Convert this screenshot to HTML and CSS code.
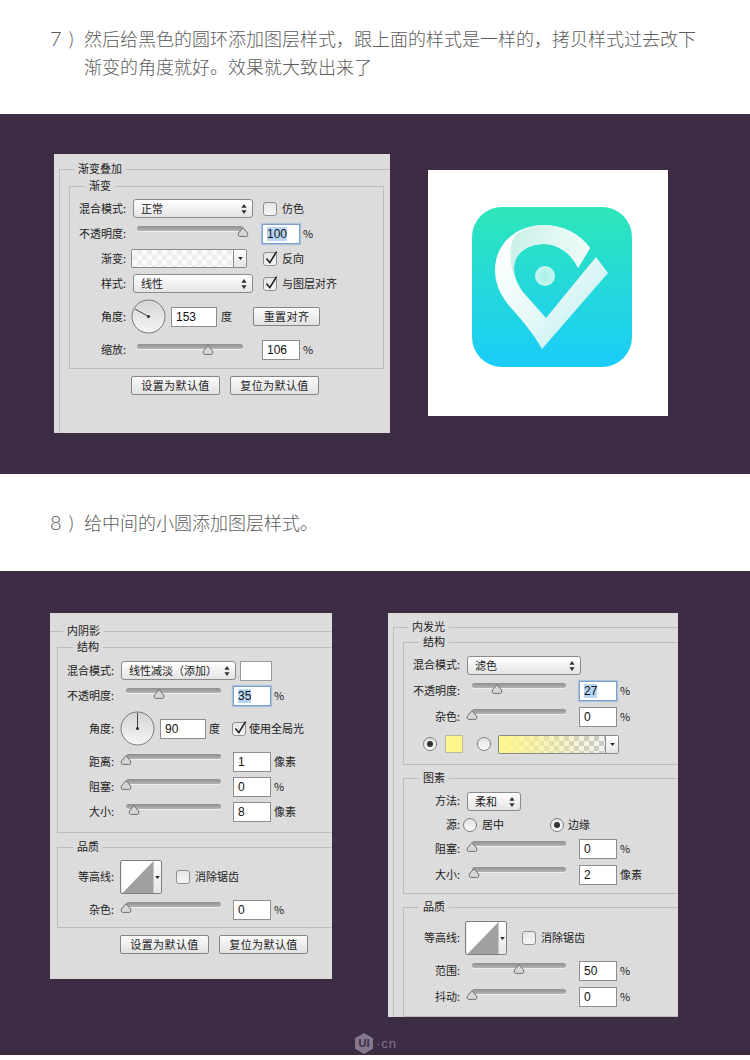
FILE: index.html
```html
<!DOCTYPE html>
<html lang="zh-CN">
<head>
<meta charset="utf-8">
<title>图层样式教程</title>
<link rel="stylesheet" href="styles.css">
</head>
<body>
<svg class="defs" width="0" height="0" aria-hidden="true">
  <defs>
    <linearGradient id="dialFill" x1="0" y1="0" x2="0" y2="1"><stop offset="0" stop-color="#d4d4d4"/><stop offset="1" stop-color="#f6f6f6"/></linearGradient>
    <linearGradient id="iconBg" x1="0" y1="0" x2="0" y2="1"><stop offset="0" stop-color="#2ee6b9"/><stop offset="1" stop-color="#1accfa"/></linearGradient>
    <linearGradient id="pinBody" gradientUnits="userSpaceOnUse" x1="495" y1="250" x2="590" y2="340"><stop offset="0" stop-color="#ffffff"/><stop offset="0.55" stop-color="#e6f9f8"/><stop offset="1" stop-color="#bfeef0"/></linearGradient>
    <linearGradient id="pinRing" gradientUnits="userSpaceOnUse" x1="510" y1="250" x2="590" y2="250"><stop offset="0" stop-color="#cbf0e8"/><stop offset="1" stop-color="#effcf9"/></linearGradient>
    <radialGradient id="pinDot"><stop offset="0" stop-color="#a5f0e6"/><stop offset="1" stop-color="#c8f7f2"/></radialGradient>
    <symbol id="thumb" viewBox="0 0 12 10"><path d="M6 .7 L10.6 6 Q11.5 9.4 9.5 9.4 H2.5 Q.5 9.4 1.4 6 Z" fill="#d6d6d6" stroke="#6f6f6f" stroke-width="1"/></symbol>
    <symbol id="updown" viewBox="0 0 6 10"><path d="M3 0 L5.6 3.8 H.4 Z M3 10 L.4 6.2 H5.6 Z" fill="#333"/></symbol>
    <symbol id="caret" viewBox="0 0 6 4"><path d="M0 0 H6 L3 4 Z" fill="#222"/></symbol>
    <symbol id="check" viewBox="0 0 16 16"><path d="M3.4 8.6 L6.8 12.6 L13.6 1.6" fill="none" stroke="#222" stroke-width="1.6"/></symbol>
  </defs>
</svg>

<section class="text-band band-a">
  <p class="step"><span class="step-no">7<span class="paren">)</span></span><span>然后给黑色的圆环添加图层样式，跟上面的样式是一样的，拷贝样式过去改下<br>渐变的角度就好。效果就大致出来了</span></p>
</section>

<section class="dark-band band-one">
  <div class="panel panel-gradient">
    <div class="group outer">
      <span class="legend">渐变叠加</span>
      <div class="group inner">
        <span class="legend">渐变</span>
        <div class="row">
          <span class="label">混合模式:</span>
          <div class="select">正常<svg class="updown"><use href="#updown"/></svg></div>
          <span class="box after-select"></span><span class="box-text">仿色</span>
        </div>
        <div class="row">
          <span class="label">不透明度:</span>
          <div class="slider"><svg class="thumb" style="left:100%"><use href="#thumb"/></svg></div>
          <div class="field focus"><span class="sel">100</span></div><span class="unit">%</span>
        </div>
        <div class="row">
          <span class="label">渐变:</span>
          <div class="swatch-bar"><div class="checker"></div><div class="caret-cell"><svg class="caret"><use href="#caret"/></svg></div></div>
          <span class="box checked after-bar"><svg class="tick"><use href="#check"/></svg></span><span class="box-text">反向</span>
        </div>
        <div class="row">
          <span class="label">样式:</span>
          <div class="select">线性<svg class="updown"><use href="#updown"/></svg></div>
          <span class="box checked after-select"><svg class="tick"><use href="#check"/></svg></span><span class="box-text">与图层对齐</span>
        </div>
        <div class="row row-dial">
          <span class="label">角度:</span>
          <svg class="dial" viewBox="0 0 35 35"><circle cx="17.5" cy="17.5" r="16.5" fill="url(#dialFill)" stroke="#777"/><line x1="17.5" y1="17.5" x2="4" y2="10" stroke="#444"/><circle cx="17.5" cy="17.5" r="1.6" fill="#333"/></svg>
          <div class="field angle">153</div><span class="unit deg">度</span>
          <div class="btn btn-reset">重置对齐</div>
        </div>
        <div class="row">
          <span class="label">缩放:</span>
          <div class="slider low"><svg class="thumb" style="left:67%"><use href="#thumb"/></svg></div>
          <div class="field">106</div><span class="unit">%</span>
        </div>
      </div>
      <div class="btn-row"><div class="btn">设置为默认值</div><div class="btn">复位为默认值</div></div>
    </div>
  </div>

  <div class="preview">
    <svg class="app-icon" viewBox="472 207 160 160">
      <rect x="472" y="207" width="160" height="160" rx="30" fill="url(#iconBg)"/>
      <path d="M542 349 L608 273 L596 257 L546 318 L523 292 C517 284 514 276 514 268 C514 253 528 244 544 244 C558 244 572 254 578 268 L590 248 C580 234 563 225 544 225 C516 225 495 244 495 270 C495 285 502 298 512 309 C522 320 533 333 542 349 Z" fill="url(#pinBody)"/>
      <path d="M578 268 L590 248 C580 234 563 225 544 225 C532 225 521 229 514 237 C509 247 509 264 515 279 C514 275 514 272 514 268 C514 253 528 244 544 244 C558 244 572 254 578 268 Z" fill="url(#pinRing)"/>
      <circle cx="545" cy="276" r="10" fill="url(#pinDot)"/>
    </svg>
  </div>
</section>

<section class="text-band band-b">
  <p class="step"><span class="step-no">8<span class="paren">)</span></span><span>给中间的小圆添加图层样式。</span></p>
</section>

<section class="dark-band band-two">
  <div class="panel panel-shadow">
    <div class="group outer">
      <span class="legend">内阴影</span>
      <div class="group inner">
        <span class="legend">结构</span>
        <div class="row">
          <span class="label">混合模式:</span>
          <div class="select">线性减淡（添加）<svg class="updown"><use href="#updown"/></svg></div>
          <div class="color-chip"></div>
        </div>
        <div class="row">
          <span class="label">不透明度:</span>
          <div class="slider"><svg class="thumb" style="left:35%"><use href="#thumb"/></svg></div>
          <div class="field focus"><span class="sel">35</span></div><span class="unit">%</span>
        </div>
        <div class="row row-dial">
          <span class="label">角度:</span>
          <svg class="dial" viewBox="0 0 35 35"><circle cx="17.5" cy="17.5" r="16.5" fill="url(#dialFill)" stroke="#777"/><line x1="17.5" y1="17.5" x2="17.5" y2="2" stroke="#444"/><circle cx="17.5" cy="17.5" r="1.6" fill="#333"/></svg>
          <div class="field angle">90</div><span class="unit deg">度</span>
          <span class="box checked after-deg"><svg class="tick"><use href="#check"/></svg></span><span class="box-text tight">使用全局光</span>
        </div>
        <div class="row">
          <span class="label">距离:</span>
          <div class="slider"><svg class="thumb" style="left:0%"><use href="#thumb"/></svg></div>
          <div class="field">1</div><span class="unit">像素</span>
        </div>
        <div class="row">
          <span class="label">阻塞:</span>
          <div class="slider"><svg class="thumb" style="left:0%"><use href="#thumb"/></svg></div>
          <div class="field">0</div><span class="unit">%</span>
        </div>
        <div class="row">
          <span class="label">大小:</span>
          <div class="slider"><svg class="thumb" style="left:8%"><use href="#thumb"/></svg></div>
          <div class="field">8</div><span class="unit">像素</span>
        </div>
      </div>
      <div class="group inner quality">
        <span class="legend">品质</span>
        <div class="row row-contour">
          <span class="label">等高线:</span>
          <div class="contour"><svg class="curve" viewBox="0 0 33 33"><rect width="33" height="33" fill="#fff"/><path d="M1 33 L33 0 V33 Z" fill="#a0a0a0"/></svg><div class="contour-caret"><svg class="caret"><use href="#caret"/></svg></div></div>
          <span class="box after-contour"></span><span class="box-text">消除锯齿</span>
        </div>
        <div class="row">
          <span class="label">杂色:</span>
          <div class="slider"><svg class="thumb" style="left:0%"><use href="#thumb"/></svg></div>
          <div class="field">0</div><span class="unit">%</span>
        </div>
      </div>
      <div class="btn-row"><div class="btn">设置为默认值</div><div class="btn">复位为默认值</div></div>
    </div>
  </div>

  <div class="panel panel-glow">
    <div class="group outer">
      <span class="legend">内发光</span>
      <div class="group inner">
        <span class="legend">结构</span>
        <div class="row">
          <span class="label">混合模式:</span>
          <div class="select">滤色<svg class="updown"><use href="#updown"/></svg></div>
        </div>
        <div class="row">
          <span class="label">不透明度:</span>
          <div class="slider"><svg class="thumb" style="left:27%"><use href="#thumb"/></svg></div>
          <div class="field focus"><span class="sel">27</span></div><span class="unit">%</span>
        </div>
        <div class="row">
          <span class="label">杂色:</span>
          <div class="slider"><svg class="thumb" style="left:0%"><use href="#thumb"/></svg></div>
          <div class="field">0</div><span class="unit">%</span>
        </div>
        <div class="row row-colors">
          <span class="radio on first"></span>
          <div class="yellow-chip"></div>
          <span class="radio second"></span>
          <div class="swatch-bar yellow"><div class="checker"></div><div class="caret-cell"><svg class="caret"><use href="#caret"/></svg></div></div>
        </div>
      </div>
      <div class="group inner elements">
        <span class="legend">图素</span>
        <div class="row">
          <span class="label">方法:</span>
          <div class="select short">柔和<svg class="updown"><use href="#updown"/></svg></div>
        </div>
        <div class="row row-source">
          <span class="label">源:</span>
          <span class="radio src-a"></span><span class="box-text">居中</span>
          <span class="radio on src-b"></span><span class="box-text near">边缘</span>
        </div>
        <div class="row">
          <span class="label">阻塞:</span>
          <div class="slider"><svg class="thumb" style="left:0%"><use href="#thumb"/></svg></div>
          <div class="field">0</div><span class="unit">%</span>
        </div>
        <div class="row">
          <span class="label">大小:</span>
          <div class="slider"><svg class="thumb" style="left:2%"><use href="#thumb"/></svg></div>
          <div class="field">2</div><span class="unit">像素</span>
        </div>
      </div>
      <div class="group inner quality">
        <span class="legend">品质</span>
        <div class="row row-contour">
          <span class="label">等高线:</span>
          <div class="contour"><svg class="curve" viewBox="0 0 33 33"><rect width="33" height="33" fill="#fff"/><path d="M1 33 L33 0 V33 Z" fill="#a0a0a0"/></svg><div class="contour-caret"><svg class="caret"><use href="#caret"/></svg></div></div>
          <span class="box after-contour"></span><span class="box-text">消除锯齿</span>
        </div>
        <div class="row">
          <span class="label">范围:</span>
          <div class="slider"><svg class="thumb" style="left:50%"><use href="#thumb"/></svg></div>
          <div class="field">50</div><span class="unit">%</span>
        </div>
        <div class="row">
          <span class="label">抖动:</span>
          <div class="slider"><svg class="thumb" style="left:0%"><use href="#thumb"/></svg></div>
          <div class="field">0</div><span class="unit">%</span>
        </div>
      </div>
    </div>
  </div>

  <div class="watermark">
    <span class="hex"><svg class="hex-shape" viewBox="0 0 18 21"><path d="M9 0 L18 5.2 V15.8 L9 21 L0 15.8 V5.2 Z" fill="#85788c"/></svg><span class="hex-text">UI</span></span>
    <span class="wm-text">·cn</span>
  </div>
</section>
</body>
</html>
```

FILE: styles.css
```css
* { box-sizing: border-box; }

html, body {
  margin: 0;
  padding: 0;
  background: #fff;
}

body {
  width: 750px;
  height: 1060px;
  overflow: hidden;
  font-family: "Noto Sans CJK SC", "Liberation Sans", sans-serif;
  color: #222;
}

.defs { position: absolute; }

/* text bands */
.text-band { background: #fff; padding-left: 50px; }
.band-a { height: 114px; padding-top: 24px; }
.band-b { height: 97px; padding-top: 34px; }

.step {
  margin: 0;
  display: flex;
  font-size: 18px;
  line-height: 28px;
  font-weight: 300;
  color: #5c5c5c;
}

.step-no {
  flex: none;
  width: 34px;
  font-family: "Lato", "Liberation Sans", sans-serif;
  font-size: 20px;
  font-weight: 300;
  color: #5c5c5c;
}

.paren { margin-left: 7px; }

/* dark bands */
.dark-band {
  position: relative;
  display: flex;
  align-items: flex-start;
  background: #3c2c44;
}

.band-one { height: 360px; padding: 40px 0 0 54px; gap: 38px; }
.band-two { height: 484px; padding: 42px 0 0 50px; gap: 56px; }

/* panels */
.panel {
  flex: none;
  background: #dcdcdc;
  overflow: hidden;
  font-size: 11px;
  line-height: 14px;
  --label: 56px;
  --select: 120px;
  --slider-gap: 11px;
  --slider: 106px;
  --field-gap: 19px;
  --select-gap: 7px;
  --row: 25px;
}

.panel-gradient { width: 336px; height: 279px; --select: 120px; }
.panel-shadow {
  width: 282px;
  height: 366px;
  --select: 115px;
  --slider-gap: 12px;
  --slider: 95px;
  --field-gap: 12px;
}
.panel-glow {
  width: 290px;
  height: 404px;
  --select: 114px;
  --slider-gap: 12px;
  --slider: 94px;
  --field-gap: 13px;
  --row: 26px;
}

.group {
  position: relative;
  border: 1px solid #bcbcbc;
}

.legend {
  position: absolute;
  top: -9px;
  height: 14px;
  padding: 0 4px;
  background: #dcdcdc;
  white-space: nowrap;
}

.outer {
  border-right: 0;
  border-bottom: 0;
}

.panel-gradient .outer { margin: 15px 0 0 5px; padding: 16px 6px 0 9px; height: 264px; }
.panel-gradient .outer > .legend { left: 14px; }
.panel-shadow .outer { margin-top: 18px; padding: 15px 0 0 7px; height: 348px; border-left: 0; }
.panel-shadow .outer > .legend { left: 13px; }
.panel-glow .outer { margin: 14px 0 0 5px; padding: 14px 0 0 9px; height: 390px; }
.panel-glow .outer > .legend { left: 14px; }

.inner > .legend { left: 15px; }

.panel-gradient .inner { padding: 9px 0 5px; height: 183px; }
.panel-shadow .inner { padding: 10px 0 8px; border-right: 0; }
.panel-shadow .quality { margin-top: 14px; padding: 12px 0 5px; }
.panel-glow .inner { padding: 9px 0 6px; border-right: 0; }
.panel-glow .elements { margin-top: 13px; padding-bottom: 5px; }
.panel-glow .quality { margin-top: 13px; padding: 13px 0 6px; }

/* rows */
.row {
  display: flex;
  align-items: center;
  height: var(--row);
  white-space: nowrap;
}

.row-dial { height: 35px; margin: 3px 0; }
.row-contour { height: 34px; margin-bottom: 3px; }
.row-colors { height: 28px; padding-left: 19px; }
.row-source { height: 22px; }

.label {
  flex: none;
  width: var(--label);
  padding-bottom: 2px;
  text-align: right;
}

.select {
  position: relative;
  flex: none;
  width: var(--select);
  height: 19px;
  margin-left: var(--select-gap);
  padding-left: 7px;
  line-height: 16px;
  border: 1px solid #8b8b8b;
  border-radius: 3px;
  background: linear-gradient(#ffffff, #e4e4e4);
}

.select.short { width: 54px; }

.updown {
  position: absolute;
  right: 5px;
  top: 4px;
  width: 6px;
  height: 10px;
}

.slider {
  position: relative;
  flex: none;
  align-self: flex-start;
  width: var(--slider);
  height: 5px;
  margin: 5px 0 0 var(--slider-gap);
  border-radius: 2.5px;
  background: linear-gradient(#8e8e8e, #b4b4b4);
  box-shadow: 0 1px 0 #eee;
}

.slider.low { margin-top: 7px; }

.thumb {
  position: absolute;
  top: 1px;
  width: 12px;
  height: 10px;
  margin-left: -6px;
}

.field {
  flex: none;
  width: 38px;
  height: 20px;
  margin-left: var(--field-gap);
  padding-left: 4px;
  font-family: "Liberation Sans", sans-serif;
  font-size: 12px;
  line-height: 18px;
  color: #111;
  background: #fff;
  border: 1px solid #8d8d8d;
}

.field.focus {
  border-color: #7d9fc6;
  box-shadow: 0 0 1px 1px #a9c3df;
}

.sel { background: #b7d6f5; }

.field.angle { width: 46px; margin-left: 5px; }

.unit { margin-left: 3px; padding-bottom: 2px; }
.unit.deg { width: 11px; margin-left: 4px; }

.box {
  position: relative;
  flex: none;
  width: 14px;
  height: 14px;
  border: 1px solid #8f8f8f;
  border-radius: 3px;
  background: linear-gradient(#e6e6e6, #f6f6f6);
}

.after-select { margin-left: 10px; }
.after-bar { margin-left: 16px; }
.after-deg { margin-left: 12px; }
.after-contour { margin-left: 14px; }

.tick {
  position: absolute;
  left: -1px;
  top: -3px;
  width: 16px;
  height: 16px;
}

.box-text { margin-left: 5px; padding-bottom: 2px; }
.box-text.tight { margin-left: 3px; }
.box-text.near { margin-left: 4px; }

.swatch-bar {
  display: flex;
  flex: none;
  width: 116px;
  height: 19px;
  margin-left: 5px;
  border: 1px solid #8b8b8b;
  border-radius: 2px;
  overflow: hidden;
}

.checker {
  flex: 1;
  background: repeating-conic-gradient(#ededed 0 25%, #fbfbfb 0 50%) 0 0 / 10px 10px;
}

.caret-cell {
  display: flex;
  flex: none;
  align-items: center;
  justify-content: center;
  width: 13px;
  border-left: 1px solid #8b8b8b;
  background: linear-gradient(#fff, #e4e4e4);
}

.caret { width: 5px; height: 3px; }

.swatch-bar.yellow { width: 121px; margin-left: 7px; }
.swatch-bar.yellow .checker {
  background:
    linear-gradient(90deg, #fdf68c 0%, rgba(253, 246, 140, 0) 100%),
    repeating-conic-gradient(#c9c9c9 0 25%, #f3f3f3 0 50%) 0 0 / 10px 10px;
}

.dial { flex: none; width: 35px; height: 35px; margin-left: 5px; }
.panel-shadow .dial { margin-left: 6px; }
.panel-shadow .field.angle { margin-left: 5px; }
.panel-shadow .unit.deg { margin-left: 3px; }

.btn {
  flex: none;
  width: 89px;
  height: 19px;
  line-height: 16px;
  text-align: center;
  letter-spacing: .4px;
  border: 1px solid #858585;
  border-radius: 2px;
  background: linear-gradient(#fbfbfb, #e2e2e2);
}

.btn-reset { width: 67px; margin-left: 21px; }

.btn-row { display: flex; gap: 10px; margin-top: 7px; }
.panel-gradient .btn-row { margin-left: 62px; }
.panel-shadow .btn-row { margin-left: 63px; }

.color-chip {
  flex: none;
  width: 32px;
  height: 20px;
  margin-left: 4px;
  background: #fff;
  border: 1px solid #9a9a9a;
}

.radio {
  position: relative;
  flex: none;
  width: 14px;
  height: 14px;
  border: 1px solid #7f7f7f;
  border-radius: 50%;
  background: linear-gradient(#e2e2e2, #fafafa);
}

.radio.on::after {
  content: "";
  position: absolute;
  left: 3px;
  top: 3px;
  width: 6px;
  height: 6px;
  border-radius: 50%;
  background: #333;
}

.radio.second { margin-left: 14px; }
.radio.src-a { margin-left: 3px; }
.radio.src-b { margin-left: 46px; }

.yellow-chip {
  flex: none;
  width: 18px;
  height: 18px;
  margin-left: 8px;
  background: #fdf68c;
  border: 1px solid #b9b9a0;
}

.contour {
  display: flex;
  flex: none;
  width: 42px;
  height: 34px;
  margin-left: 6px;
  border: 1px solid #7e7e7e;
  border-radius: 2px;
  overflow: hidden;
}

.panel-glow .contour { margin-left: 5px; }
.panel-glow .after-contour { margin-left: 15px; }

.curve { flex: none; width: 33px; height: 32px; }

.contour-caret {
  display: flex;
  flex: 1;
  align-items: center;
  justify-content: center;
  background: linear-gradient(#fff, #e6e6e6);
}

/* preview */
.preview {
  flex: none;
  width: 240px;
  height: 246px;
  margin-top: 16px;
  padding: 37px 44px 0;
  background: #fff;
}

.app-icon { display: block; width: 160px; height: 160px; }

/* watermark */
.watermark {
  position: absolute;
  left: 355px;
  top: 462px;
  display: flex;
  align-items: center;
  gap: 3px;
}

.hex { position: relative; display: block; width: 18px; height: 21px; }
.hex-shape { display: block; width: 18px; height: 21px; }

.hex-text {
  position: absolute;
  inset: 0;
  text-align: center;
  font-family: "Liberation Sans", sans-serif;
  font-size: 11px;
  font-weight: 700;
  line-height: 21px;
  color: #3c2c44;
}

.wm-text {
  font-family: "Liberation Sans", sans-serif;
  font-size: 13px;
  line-height: 21px;
  letter-spacing: 1px;
  color: #85788c;
}
```
